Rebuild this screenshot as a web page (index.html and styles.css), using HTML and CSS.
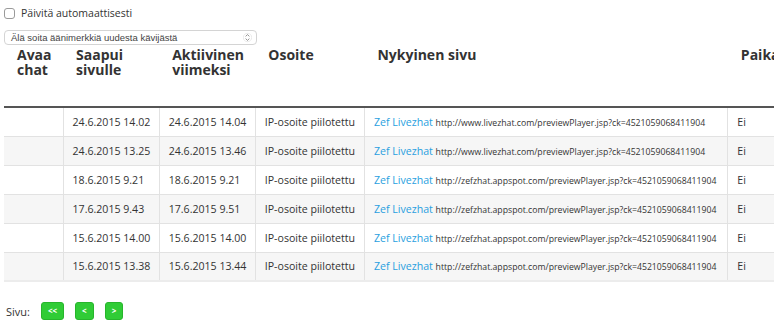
FILE: index.html
```html
<!DOCTYPE html>
<html lang="fi">
<head>
    <meta charset="UTF-8">
    <title>Kävijät</title>
    <link rel="stylesheet" href="styles.css">
</head>
<body>
    <div class="page">
        <label class="auto-refresh">
            <input type="checkbox" class="check">
            <span>Päivitä automaattisesti</span>
        </label>

        <div class="sound-select">
            <span class="select-text">Älä soita äänimerkkiä uudesta kävijästä</span>
            <svg class="select-arrows" width="9" height="11" viewBox="0 0 9 11">
                <circle cx="4.5" cy="5.5" r="4.2" fill="#fff" stroke="#ddd" stroke-width="0.6"/>
                <path d="M2.6 4.4 L4.5 2.6 L6.4 4.4" fill="none" stroke="#888" stroke-width="0.9"/>
                <path d="M2.6 6.6 L4.5 8.4 L6.4 6.6" fill="none" stroke="#888" stroke-width="0.9"/>
            </svg>
        </div>

        <table class="visitors">
            <colgroup>
                <col style="width: 59px">
                <col style="width: 96px">
                <col style="width: 96px">
                <col style="width: 109px">
                <col style="width: 363px">
                <col style="width: 62px">
            </colgroup>
            <thead>
                <tr>
                    <th>Avaa chat</th>
                    <th>Saapui sivulle</th>
                    <th>Aktiivinen viimeksi</th>
                    <th>Osoite</th>
                    <th>Nykyinen sivu</th>
                    <th>Paikalla</th>
                </tr>
            </thead>
            <tbody>
                <tr>
                    <td></td>
                    <td>24.6.2015 14.02</td>
                    <td>24.6.2015 14.04</td>
                    <td>IP-osoite piilotettu</td>
                    <td><a href="#">Zef Livezhat</a> <span class="url">http://www.livezhat.com/previewPlayer.jsp?ck=4521059068411904</span></td>
                    <td>Ei</td>
                </tr>
                <tr>
                    <td></td>
                    <td>24.6.2015 13.25</td>
                    <td>24.6.2015 13.46</td>
                    <td>IP-osoite piilotettu</td>
                    <td><a href="#">Zef Livezhat</a> <span class="url">http://www.livezhat.com/previewPlayer.jsp?ck=4521059068411904</span></td>
                    <td>Ei</td>
                </tr>
                <tr>
                    <td></td>
                    <td>18.6.2015 9.21</td>
                    <td>18.6.2015 9.21</td>
                    <td>IP-osoite piilotettu</td>
                    <td><a href="#">Zef Livezhat</a> <span class="url">http://zefzhat.appspot.com/previewPlayer.jsp?ck=4521059068411904</span></td>
                    <td>Ei</td>
                </tr>
                <tr>
                    <td></td>
                    <td>17.6.2015 9.43</td>
                    <td>17.6.2015 9.51</td>
                    <td>IP-osoite piilotettu</td>
                    <td><a href="#">Zef Livezhat</a> <span class="url">http://zefzhat.appspot.com/previewPlayer.jsp?ck=4521059068411904</span></td>
                    <td>Ei</td>
                </tr>
                <tr>
                    <td></td>
                    <td>15.6.2015 14.00</td>
                    <td>15.6.2015 14.00</td>
                    <td>IP-osoite piilotettu</td>
                    <td><a href="#">Zef Livezhat</a> <span class="url">http://zefzhat.appspot.com/previewPlayer.jsp?ck=4521059068411904</span></td>
                    <td>Ei</td>
                </tr>
                <tr>
                    <td></td>
                    <td>15.6.2015 13.38</td>
                    <td>15.6.2015 13.44</td>
                    <td>IP-osoite piilotettu</td>
                    <td><a href="#">Zef Livezhat</a> <span class="url">http://zefzhat.appspot.com/previewPlayer.jsp?ck=4521059068411904</span></td>
                    <td>Ei</td>
                </tr>
            </tbody>
        </table>

        <div class="pager">
            <span>Sivu:</span>
            <button class="btn-page">&lt;&lt;</button>
            <button class="btn-page">&lt;</button>
            <button class="btn-page">&gt;</button>
        </div>
    </div>
</body>
</html>
```

FILE: styles.css
```css
html, body {
    overflow: hidden;
}
body {
    margin: 0;
    padding: 0 0 0 4px;
    font-family: "Open Sans", Arial, sans-serif;
    color: #333;
    background-color: white;
}
.page {
    width: 790px;
}
.auto-refresh {
    display: flex;
    align-items: center;
    gap: 6px;
    height: 14px;
    margin-top: 6px;
    font-size: 10.5px;
    color: #333;
}
.check {
    appearance: none;
    -webkit-appearance: none;
    margin: 0;
    width: 11px;
    height: 11px;
    border: 1px solid #9a9a9a;
    border-radius: 3px;
    background-color: white;
}
.sound-select {
    display: flex;
    align-items: center;
    justify-content: space-between;
    box-sizing: border-box;
    width: 253px;
    height: 15px;
    margin-top: 10px;
    padding: 0 4px 0 6px;
    border: 1px solid #d4d4d4;
    border-radius: 4px;
    font-family: "Liberation Sans", Arial, sans-serif;
    font-size: 9.5px;
    color: #444;
}
.select-text {
    line-height: 13px;
}
.visitors {
    border-collapse: collapse;
    table-layout: fixed;
    width: 786px;
    margin-top: 1px;
}
.visitors th {
    height: 61px;
    box-sizing: border-box;
    padding: 1px 8px 0 13px;
    vertical-align: top;
    text-align: left;
    font-size: 14px;
    line-height: 15px;
    font-weight: bold;
    color: #333;
    border-bottom: 2px solid #555;
}
.visitors td {
    height: 29px;
    box-sizing: border-box;
    padding: 0 8px 0 9px;
    font-size: 10.6px;
    white-space: nowrap;
    border-top: 1px solid #e2e2e2;
    border-left: 1px solid #e2e2e2;
    vertical-align: middle;
}
.visitors td:first-child {
    border-left: none;
}
.visitors tbody tr:nth-child(even) td {
    background-color: #f6f6f6;
}
.visitors tbody tr:last-child td {
    border-bottom: 2px solid #ececec;
}
.visitors a {
    color: #2a9fe0;
    text-decoration: none;
}
.url {
    font-size: 8.7px;
    color: #333;
}
.pager {
    display: flex;
    align-items: center;
    gap: 11px;
    margin-top: 20px;
    padding-left: 2px;
    font-size: 11px;
    color: #333;
}
.btn-page {
    height: 18px;
    min-width: 18px;
    padding: 0 6px;
    border: 1px solid #27b52c;
    border-radius: 3px;
    background-color: #30cc36;
    color: white;
    font-family: "Open Sans", Arial, sans-serif;
    font-size: 8px;
    font-weight: bold;
    line-height: 16px;
    cursor: pointer;
}
```
